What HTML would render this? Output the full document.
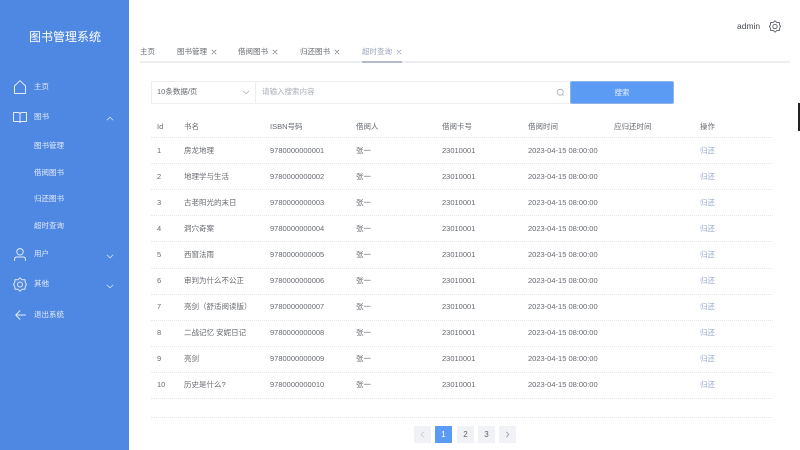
<!DOCTYPE html>
<html><head><meta charset="utf-8">
<style>
*{box-sizing:border-box;margin:0;padding:0}
html,body{width:800px;height:450px;overflow:hidden;background:#fff;font-family:"Liberation Sans","Noto Sans CJK SC",sans-serif;font-size:7.5px;color:#666a70}
body{filter:blur(.3px)}
.a{position:absolute;white-space:nowrap;line-height:12px}
#side{position:absolute;left:0;top:0;width:129px;height:450px;background:#4f88e2}
#side .a{color:#e4ecf8}
.h{position:absolute;left:151px;width:622px;height:1px;border-top:1px dotted #e4e6ea}
svg{position:absolute;fill:none;stroke-linejoin:round;stroke-linecap:round}
.p{position:absolute;top:426px;width:17px;height:17px;background:#f0f2f5;text-align:center;line-height:17px;color:#606266;font-size:8px}
.l{color:#9aa8c8}
</style></head><body>
<div id="side">
<div class="a" style="left:29px;top:29px;font-size:12px;line-height:16px;color:#fff;">图书管理系统</div>
<svg style="left:14px;top:80px" width="12" height="14" stroke="#e4ecf8" stroke-width="1"><path d="M.5 13.500V6L6 .7 11.500 6V13.500z"/></svg>
<div class="a" style="left:34px;top:81px">主页</div>
<svg style="left:13px;top:111px" width="14" height="13" stroke="#e4ecf8" stroke-width="1"><path d="M.5 1.500H5Q7 1.500 7 3.500V11.500Q7 10.500 5 10.500H.5zM13.500 1.500H9Q7 1.500 7 3.500M7 11.500Q7 10.500 9 10.500H13.500V1.500"/></svg>
<div class="a" style="left:34px;top:111px">图书</div>
<svg style="left:106px;top:116px" width="8" height="5" stroke="#cfe0f8" stroke-width=".8"><path d="M1 4L4 1.200 7 4"/></svg>
<div class="a" style="left:34px;top:140px">图书管理</div>
<div class="a" style="left:34px;top:167px">借阅图书</div>
<div class="a" style="left:34px;top:193px">归还图书</div>
<div class="a" style="left:34px;top:220px">超时查询</div>
<svg style="left:14px;top:248px" width="12" height="13" stroke="#e4ecf8" stroke-width="1"><circle cx="6" cy="3.800" r="3.200"/><path d="M.6 12.500V11Q.6 9 3 9H9Q11.400 9 11.400 11V12.500"/></svg>
<div class="a" style="left:34px;top:248px">用户</div>
<svg style="left:106px;top:254px" width="8" height="5" stroke="#cfe0f8" stroke-width=".8"><path d="M1 1L4 3.800 7 1"/></svg>
<svg style="left:13px;top:277px" width="14" height="15" stroke="#e4ecf8" stroke-width="1"><path d="M7 .8L9 2.800H12L12.300 5.500 13.500 7.500 12.300 9.500 12 12.200H9L7 14.200 5 12.200H2L1.700 9.500.5 7.500 1.700 5.500 2 2.800H5z"/><circle cx="7" cy="7.500" r="2.500"/></svg>
<div class="a" style="left:34px;top:278px">其他</div>
<svg style="left:106px;top:284px" width="8" height="5" stroke="#cfe0f8" stroke-width=".8"><path d="M1 1L4 3.800 7 1"/></svg>
<svg style="left:15px;top:310px" width="11" height="10" stroke="#e4ecf8" stroke-width="1"><path d="M10.500 5H.8M5 .7L.8 5 5 9.300"/></svg>
<div class="a" style="left:34px;top:309px">退出系统</div>
</div>

<div class="a" style="left:737px;top:20px;font-size:8.5px;color:#4a4d55">admin</div>
<svg style="left:769px;top:20px" width="12" height="13" viewBox="0 0 14 15" stroke="#555a63" stroke-width="1"><path d="M7 .8L9 2.800H12L12.300 5.500 13.500 7.500 12.300 9.500 12 12.200H9L7 14.200 5 12.200H2L1.700 9.500.5 7.500 1.700 5.500 2 2.800H5z"/><circle cx="7" cy="7.500" r="2.500"/></svg>

<div class="a" style="left:140px;top:46px">主页</div>
<div class="a" style="left:177px;top:46px">图书管理</div>
<svg style="left:211px;top:49px" width="6" height="6" stroke="#777" stroke-width=".7"><path d="M1 1L5 5M5 1L1 5"/></svg>
<div class="a" style="left:238px;top:46px">借阅图书</div>
<svg style="left:272px;top:49px" width="6" height="6" stroke="#777" stroke-width=".7"><path d="M1 1L5 5M5 1L1 5"/></svg>
<div class="a" style="left:300px;top:46px">归还图书</div>
<svg style="left:334px;top:49px" width="6" height="6" stroke="#777" stroke-width=".7"><path d="M1 1L5 5M5 1L1 5"/></svg>
<div class="a" style="left:362px;top:46px;color:#9aa3b8">超时查询</div>
<svg style="left:396px;top:49px" width="6" height="6" stroke="#9aa3b8" stroke-width=".7"><path d="M1 1L5 5M5 1L1 5"/></svg>
<div style="position:absolute;left:140px;top:61px;width:650px;height:2px;background:#eceef1"></div>
<div style="position:absolute;left:362px;top:61px;width:40px;height:2px;background:#b4bacb"></div>

<div style="position:absolute;left:151px;top:81px;width:420px;height:23px;border:1px solid #eceef1;background:#fff"></div>
<div style="position:absolute;left:255px;top:81px;width:1px;height:23px;background:#eceef1"></div>
<div class="a" style="left:157px;top:86px">10条数据/页</div>
<svg style="left:242px;top:90px" width="8" height="5" stroke="#b0b4bb" stroke-width=".8"><path d="M1 1L4 3.800 7 1"/></svg>
<div class="a" style="left:262px;top:86px;color:#a8adb5">请输入搜索内容</div>
<svg style="left:556px;top:88px" width="9" height="9" stroke="#a8adb5" stroke-width=".8"><circle cx="4.200" cy="4.200" r="3"/><path d="M6.500 6.500L7.500 7.500"/></svg>
<div style="position:absolute;left:570px;top:81px;width:104px;height:23px;background:#5b9bf3;border-radius:2px;border:1px solid #8fb2e8;color:#e8f0fc;text-align:center;line-height:21px">搜索</div>

<div class="a" style="left:157px;top:121px">Id</div>
<div class="a" style="left:184px;top:121px">书名</div>
<div class="a" style="left:270px;top:121px">ISBN号码</div>
<div class="a" style="left:356px;top:121px">借阅人</div>
<div class="a" style="left:442px;top:121px">借阅卡号</div>
<div class="a" style="left:528px;top:121px">借阅时间</div>
<div class="a" style="left:614px;top:121px">应归还时间</div>
<div class="a" style="left:700px;top:121px">操作</div>
<div class="h" style="top:137px"></div>

<div class="a" style="left:157px;top:145px">1</div><div class="a" style="left:184px;top:145px">房龙地理</div><div class="a" style="left:270px;top:145px">9780000000001</div><div class="a" style="left:356px;top:145px">张一</div><div class="a" style="left:442px;top:145px">23010001</div><div class="a" style="left:528px;top:145px">2023-04-15 08:00:00</div><div class="a l" style="left:700px;top:145px">归还</div><div class="h" style="top:163px"></div>
<div class="a" style="left:157px;top:171px">2</div><div class="a" style="left:184px;top:171px">地理学与生活</div><div class="a" style="left:270px;top:171px">9780000000002</div><div class="a" style="left:356px;top:171px">张一</div><div class="a" style="left:442px;top:171px">23010001</div><div class="a" style="left:528px;top:171px">2023-04-15 08:00:00</div><div class="a l" style="left:700px;top:171px">归还</div><div class="h" style="top:189px"></div>
<div class="a" style="left:157px;top:197px">3</div><div class="a" style="left:184px;top:197px">古老阳光的末日</div><div class="a" style="left:270px;top:197px">9780000000003</div><div class="a" style="left:356px;top:197px">张一</div><div class="a" style="left:442px;top:197px">23010001</div><div class="a" style="left:528px;top:197px">2023-04-15 08:00:00</div><div class="a l" style="left:700px;top:197px">归还</div><div class="h" style="top:215px"></div>
<div class="a" style="left:157px;top:223px">4</div><div class="a" style="left:184px;top:223px">洞穴奇案</div><div class="a" style="left:270px;top:223px">9780000000004</div><div class="a" style="left:356px;top:223px">张一</div><div class="a" style="left:442px;top:223px">23010001</div><div class="a" style="left:528px;top:223px">2023-04-15 08:00:00</div><div class="a l" style="left:700px;top:223px">归还</div><div class="h" style="top:241px"></div>
<div class="a" style="left:157px;top:249px">5</div><div class="a" style="left:184px;top:249px">西窗法雨</div><div class="a" style="left:270px;top:249px">9780000000005</div><div class="a" style="left:356px;top:249px">张一</div><div class="a" style="left:442px;top:249px">23010001</div><div class="a" style="left:528px;top:249px">2023-04-15 08:00:00</div><div class="a l" style="left:700px;top:249px">归还</div><div class="h" style="top:268px"></div>
<div class="a" style="left:157px;top:275px">6</div><div class="a" style="left:184px;top:275px">审判为什么不公正</div><div class="a" style="left:270px;top:275px">9780000000006</div><div class="a" style="left:356px;top:275px">张一</div><div class="a" style="left:442px;top:275px">23010001</div><div class="a" style="left:528px;top:275px">2023-04-15 08:00:00</div><div class="a l" style="left:700px;top:275px">归还</div><div class="h" style="top:294px"></div>
<div class="a" style="left:157px;top:301px">7</div><div class="a" style="left:184px;top:301px">亮剑（舒适阅读版）</div><div class="a" style="left:270px;top:301px">9780000000007</div><div class="a" style="left:356px;top:301px">张一</div><div class="a" style="left:442px;top:301px">23010001</div><div class="a" style="left:528px;top:301px">2023-04-15 08:00:00</div><div class="a l" style="left:700px;top:301px">归还</div><div class="h" style="top:320px"></div>
<div class="a" style="left:157px;top:327px">8</div><div class="a" style="left:184px;top:327px">二战记忆 安妮日记</div><div class="a" style="left:270px;top:327px">9780000000008</div><div class="a" style="left:356px;top:327px">张一</div><div class="a" style="left:442px;top:327px">23010001</div><div class="a" style="left:528px;top:327px">2023-04-15 08:00:00</div><div class="a l" style="left:700px;top:327px">归还</div><div class="h" style="top:346px"></div>
<div class="a" style="left:157px;top:353px">9</div><div class="a" style="left:184px;top:353px">亮剑</div><div class="a" style="left:270px;top:353px">9780000000009</div><div class="a" style="left:356px;top:353px">张一</div><div class="a" style="left:442px;top:353px">23010001</div><div class="a" style="left:528px;top:353px">2023-04-15 08:00:00</div><div class="a l" style="left:700px;top:353px">归还</div><div class="h" style="top:372px"></div>
<div class="a" style="left:157px;top:379px">10</div><div class="a" style="left:184px;top:379px">历史是什么?</div><div class="a" style="left:270px;top:379px">9780000000010</div><div class="a" style="left:356px;top:379px">张一</div><div class="a" style="left:442px;top:379px">23010001</div><div class="a" style="left:528px;top:379px">2023-04-15 08:00:00</div><div class="a l" style="left:700px;top:379px">归还</div><div class="h" style="top:398px"></div>
<div class="h" style="top:417px"></div>

<div class="p" style="left:414px"><svg style="left:6px;top:5px" width="5" height="7" stroke="#c0c4cc" stroke-width=".8"><path d="M3.500 1L1.200 3.500 3.500 6"/></svg></div>
<div class="p" style="left:435px;background:#5b9bf3;color:#fff">1</div>
<div class="p" style="left:457px">2</div>
<div class="p" style="left:478px">3</div>
<div class="p" style="left:499px"><svg style="left:6px;top:5px" width="5" height="7" stroke="#909399" stroke-width=".8"><path d="M1.500 1L3.800 3.500 1.500 6"/></svg></div>

<div style="position:absolute;left:798px;top:103px;width:2px;height:28px;background:#222"></div>
</body></html>
